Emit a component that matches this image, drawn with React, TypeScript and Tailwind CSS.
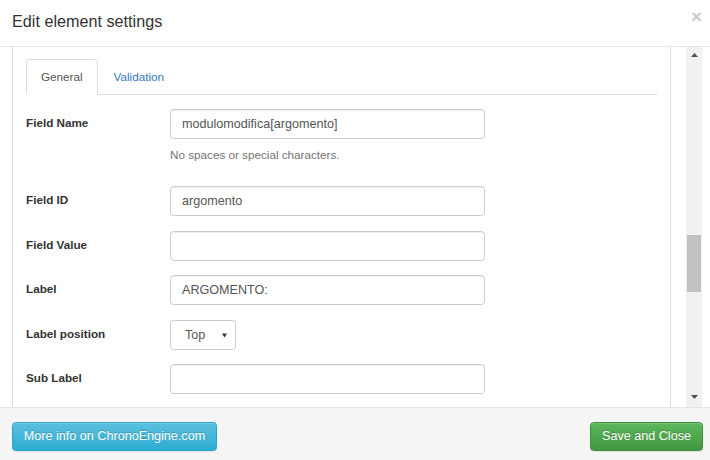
import type { ReactNode } from "react";

type RowProps = {
  children: ReactNode;
  className?: string;
  label: string;
};

function FieldRow({ children, className, label }: RowProps) {
  return (
    <div className={`flex items-start ${className ?? ""}`}>
      <label className="h-[30px] w-[144px] shrink-0 text-[11.7px] font-bold leading-[28px] text-[#333]">
        {label}
      </label>
      <div>{children}</div>
    </div>
  );
}

function TextInput({ value }: { value?: string }) {
  return (
    <div className="flex h-[30px] w-[315px] items-center rounded-[3.6px] border border-[#ccc] bg-white px-[11px] text-[12.6px] text-[#555] shadow-[inset_0_1px_1px_rgba(0,0,0,0.075)]">
      {value}
    </div>
  );
}

function ScrollBar() {
  return (
    <div className="flex h-full w-[16px] flex-col bg-[#f1f1f1]">
      <div className="flex h-[16px] items-center justify-center">
        <svg width="7" height="4" viewBox="0 0 7 4">
          <path d="M0 4 L3.5 0 L7 4 Z" fill="#505050" />
        </svg>
      </div>
      <div className="flex-1">
        <div className="mx-[1px] mt-[172px] h-[57px] bg-[#c1c1c1]" />
      </div>
      <div className="flex h-[16px] items-start justify-center pt-[4px]">
        <svg width="7" height="4" viewBox="0 0 7 4">
          <path d="M0 0 L3.5 4 L7 0 Z" fill="#505050" />
        </svg>
      </div>
    </div>
  );
}

export default function App() {
  return (
    <div className="flex h-[460px] w-[710px] flex-col overflow-hidden bg-white font-['Liberation_Sans',Arial,sans-serif] text-[#333]">
      <div className="flex h-[47px] shrink-0 items-start justify-between border-b border-[#e5e5e5] pl-[12px] pr-[8px]">
        <h4 className="pt-[12px] text-[16.2px] leading-[normal] text-[#333]">
          Edit element settings
        </h4>
        <span className="mt-[7px] text-[19px] font-bold leading-[19px] text-[#000] opacity-20">
          ×
        </span>
      </div>

      <div className="flex h-[360px] shrink-0">
        <div className="ml-[12px] w-[659px] border-x border-[#ddd] px-[13px] pt-[12px]">
          <ul className="flex border-b border-[#ddd] text-[11.7px]">
            <li className="-mb-px flex h-[36px] items-center rounded-t-[3.6px] border border-[#ddd] border-b-transparent bg-white px-[14px] text-[#555]">
              General
            </li>
            <li className="-mb-px ml-[2px] flex h-[36px] items-center border border-transparent px-[13px] text-[#337ab7]">
              Validation
            </li>
          </ul>

          <div className="mt-[14px]">
            <FieldRow label="Field Name" className="mb-[23px]">
              <TextInput value="modulomodifica[argomento]" />
              <p className="mt-[7px] text-[11.7px] leading-[17px] text-[#737373]">
                No spaces or special characters.
              </p>
            </FieldRow>
            <FieldRow label="Field ID" className="mb-[15px]">
              <TextInput value="argomento" />
            </FieldRow>
            <FieldRow label="Field Value" className="mb-[14px]">
              <TextInput />
            </FieldRow>
            <FieldRow label="Label" className="mb-[15px]">
              <TextInput value="ARGOMENTO:" />
            </FieldRow>
            <FieldRow label="Label position" className="mb-[14px]">
              <div className="flex h-[30px] w-[66px] items-center justify-between rounded-[3.6px] border border-[#ccc] bg-white pl-[14px] pr-[8px] text-[12.6px] text-[#555]">
                <span>Top</span>
                <svg width="5" height="5" viewBox="0 0 5 5">
                  <path d="M0 0.5 L5 0.5 L2.5 4.5 Z" fill="#333" />
                </svg>
              </div>
            </FieldRow>
            <FieldRow label="Sub Label">
              <TextInput />
            </FieldRow>
          </div>
        </div>
        <div className="ml-[15px] flex">
          <ScrollBar />
        </div>
      </div>

      <div className="flex flex-1 items-start justify-between border-t border-[#e5e5e5] bg-[#f5f5f5] pl-[12px] pr-[7px] pt-[14px]">
        <button
          type="button"
          className="h-[29px] w-[205px] rounded-[3.6px] border border-[#28a4c9] bg-linear-to-b from-[#5bc0de] to-[#2aabd2] text-[12.6px] text-white shadow-[inset_0_1px_0_rgba(255,255,255,0.15),0_1px_1px_rgba(0,0,0,0.075)] [text-shadow:0_-1px_0_rgba(0,0,0,0.2)]"
        >
          More info on ChronoEngine.com
        </button>
        <button
          type="button"
          className="h-[29px] w-[113px] rounded-[3.6px] border border-[#3e8f3e] bg-linear-to-b from-[#5cb85c] to-[#419641] text-[12.6px] text-white shadow-[inset_0_1px_0_rgba(255,255,255,0.15),0_1px_1px_rgba(0,0,0,0.075)] [text-shadow:0_-1px_0_rgba(0,0,0,0.2)]"
        >
          Save and Close
        </button>
      </div>
    </div>
  );
}
